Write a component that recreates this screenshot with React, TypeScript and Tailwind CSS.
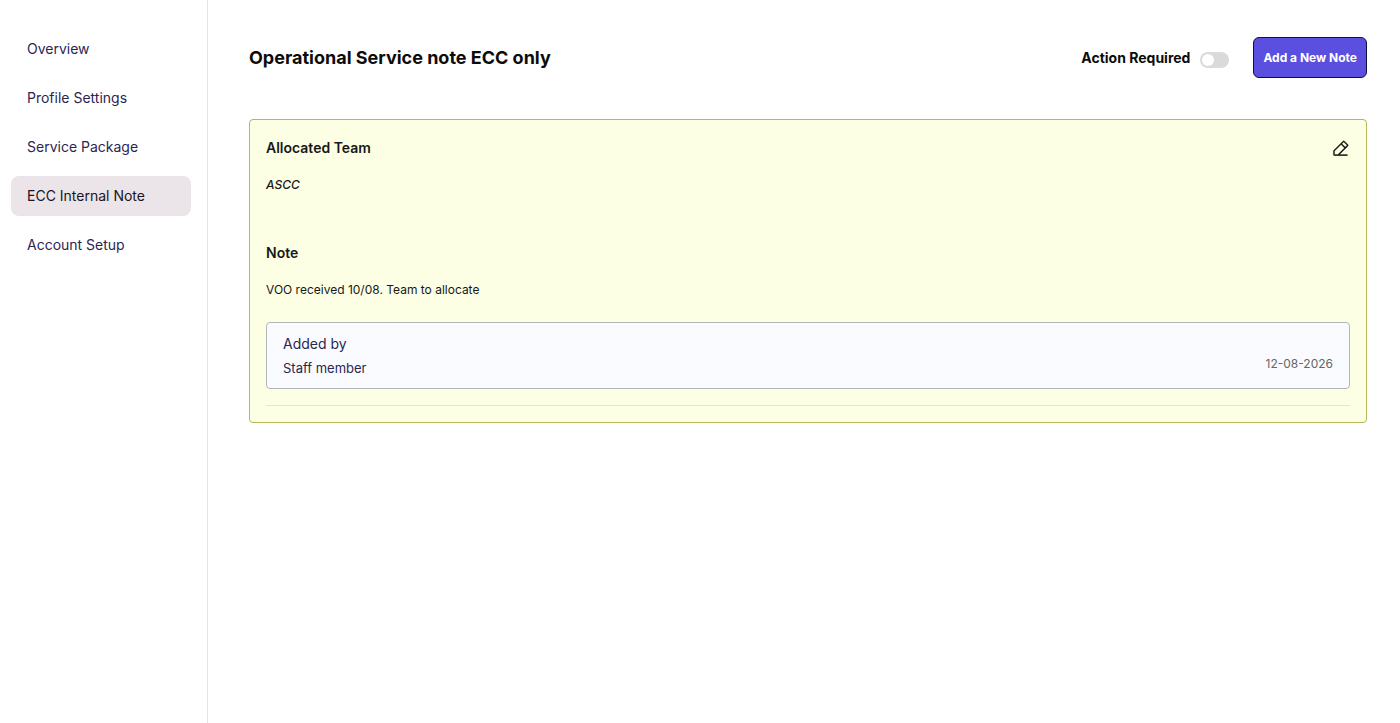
import { useState } from "react";
import { PiPencilSimpleLine } from "react-icons/pi";

const links = ["Overview", "Profile Settings", "Service Package", "ECC Internal Note", "Account Setup"];

function Sidebar() {
  return (
    <nav aria-label="Client sections" className="flex w-52 shrink-0 flex-col gap-[9px] border-r border-[#e4e4e7] pt-[29px] pr-4 pl-[11px]">
      {links.map((label) => {
        const active = label === "ECC Internal Note";
        return (
          <a
            key={label}
            href="#"
            aria-current={active ? "page" : undefined}
            className={
              active
                ? "flex h-10 items-center rounded-lg bg-[#ebe4e9] px-4 text-sm text-[#1c1420]"
                : "flex h-10 items-center rounded-lg px-4 text-sm text-[#2b2650]"
            }
          >
            {label}
          </a>
        );
      })}
    </nav>
  );
}

function NoteCard() {
  return (
    <article className="mt-[41px] rounded border border-[#b5b957] bg-[#fcffe3] px-4 py-4 text-[#181818]">
      <div className="flex items-center justify-between">
        <h2 className="text-sm leading-6 font-semibold">Allocated Team</h2>
        <button type="button" aria-label="Edit note" className="text-[#111111]">
          <PiPencilSimpleLine className="size-[19px]" strokeWidth={4} />
        </button>
      </div>
      <p className="mt-[13px] text-xs leading-6 font-medium italic">ASCC</p>
      <h2 className="mt-11 text-sm leading-6 font-semibold">Note</h2>
      <p className="mt-[13px] text-xs leading-6">VOO received 10/08. Team to allocate</p>
      <div className="mt-5 flex h-[67px] items-center justify-between rounded border border-[#b3b3b8] bg-[#fafbff] px-4">
        <div className="text-[#2b2650]">
          <p className="text-sm leading-6">Added by</p>
          <p className="text-[13px] leading-6">Staff member</p>
        </div>
        <time dateTime="2026-08-12" className="pt-4 text-xs text-[#666666]">12-08-2026</time>
      </div>
      <hr className="mt-4 border-[#e3e6d3]" />
    </article>
  );
}

export default function App() {
  const [required, setRequired] = useState(false);
  return (
    <div className="flex min-h-screen bg-white font-['Inter',sans-serif]">
      <Sidebar />
      <main className="min-w-0 flex-1 pt-[37px] pr-[33px] pl-[41px]">
        <header className="flex items-center justify-between">
          <h1 className="text-lg font-bold text-[#0c0c0c]">Operational Service note ECC only</h1>
          <div className="flex items-center">
            <label htmlFor="action-required" className="text-sm font-bold text-[#0c0c0c]">
              Action Required
            </label>
            <input
              id="action-required"
              type="checkbox"
              role="switch"
              checked={required}
              onChange={(e) => setRequired(e.target.checked)}
              className="mt-1 mr-6 ml-[10px] h-4 w-[29px] appearance-none rounded-full bg-[#dadada] p-0.5 before:block before:size-3 before:rounded-full before:bg-white checked:bg-[#5b4fe0] checked:before:ml-auto"
            />
            <button
              type="button"
              className="h-[41px] rounded-md border border-[#11103a] bg-[#5b4fe0] px-[9px] text-xs font-bold text-white"
            >
              Add a New Note
            </button>
          </div>
        </header>
        <NoteCard />
      </main>
    </div>
  );
}
